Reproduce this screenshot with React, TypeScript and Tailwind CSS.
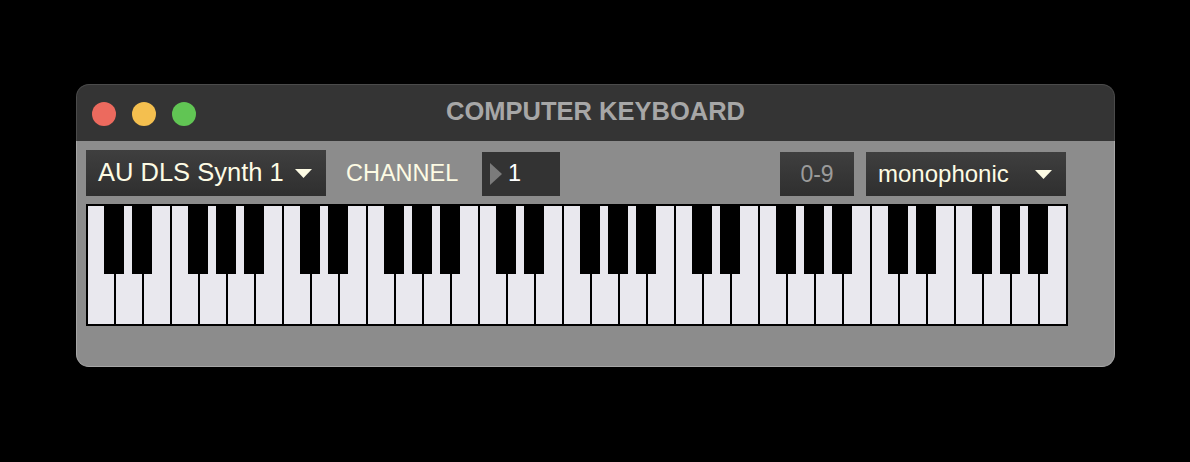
import React from "react";

const CREAM = "text-[#fdfbe4]";
const BLACK_AFTER = [0, 1, 3, 4, 5];

const WHITE_KEYS = Array.from({ length: 35 }, (_, i) => i);
const BLACK_KEYS = WHITE_KEYS.filter((i) => i < 34 && BLACK_AFTER.includes(i % 7));

function Caret() {
  return (
    <svg width="17" height="9" viewBox="0 0 17 9" className="shrink-0">
      <polygon points="0,0 17,0 8.5,9" fill="#fdfbe4" />
    </svg>
  );
}

function Keyboard() {
  return (
    <div className="relative flex gap-[2px] bg-black p-[2px] w-[982px] h-[122px]">
      {WHITE_KEYS.map((i) => (
        <div key={i} className="w-[26px] h-full bg-[#e9e8ee]" />
      ))}
      {BLACK_KEYS.map((i) => (
        <div
          key={`b${i}`}
          className="absolute top-[2px] w-[20px] h-[68px] bg-black"
          style={{ left: 28 * (i + 1) - 10 }}
        />
      ))}
    </div>
  );
}

export default function App() {
  return (
    <div
      className="w-[1190px] h-[462px] bg-black pt-[84px] pl-[76px]"
      style={{ fontFamily: '"Liberation Sans", Arial, sans-serif' }}
    >
      <div className="w-[1039px] flex flex-col">
        {/* title bar */}
        <div className="relative h-[57px] rounded-t-[13px] border border-b-0 border-[#4b4b4b] bg-[#343434] border-b border-b-[#1d1d1d] flex items-center">
          <div className="flex gap-[16px] pl-[15px] pt-[1px]">
            <span className="w-[24px] h-[24px] rounded-full bg-[#ec6a5e]" />
            <span className="w-[24px] h-[24px] rounded-full bg-[#f4bf4f]" />
            <span className="w-[24px] h-[24px] rounded-full bg-[#61c554]" />
          </div>
          <div className="absolute inset-0 flex items-center justify-center pb-[3px]">
            <span className="text-[25.5px] font-bold text-[#a7a7a7]">COMPUTER KEYBOARD</span>
          </div>
        </div>

        {/* body */}
        <div className="h-[226px] rounded-b-[13px] border border-t-0 border-[#a6a6a6] bg-[#8c8c8c] pl-[9px] pt-[9px]">
          <div className="flex items-end h-[46px]">
            <div className={`w-[240px] h-[46px] flex items-center justify-between pl-[12px] pr-[14px] bg-linear-to-b from-[#3f3f3f] to-[#2f2f2f] ${CREAM}`}>
              <span className="text-[25.5px] leading-none">AU DLS Synth 1</span>
              <Caret />
            </div>
            <div className={`h-[44px] flex items-center ml-[20px] w-[136px] text-[23.5px] ${CREAM}`}>CHANNEL</div>
            <div className="w-[78px] h-[44px] bg-[#333333] flex items-center pl-[8px]">
              <svg width="12" height="22" viewBox="0 0 12 22">
                <polygon points="0,0 12,11 0,22" fill="#7b7b7b" />
              </svg>
              <span className="ml-[6px] text-[23.5px] text-white leading-none">1</span>
            </div>
            <div className="w-[220px]" />
            <div className="w-[74px] h-[44px] flex items-center justify-center bg-linear-to-b from-[#3f3f3f] to-[#2f2f2f] text-[23px] text-[#9b9b9b]">
              0-9
            </div>
            <div className={`ml-[12px] w-[200px] h-[44px] flex items-center justify-between pl-[12px] pr-[14px] bg-linear-to-b from-[#3f3f3f] to-[#2f2f2f] ${CREAM}`}>
              <span className="text-[24px] leading-none">monophonic</span>
              <Caret />
            </div>
          </div>
          <div className="mt-[8px]">
            <Keyboard />
          </div>
        </div>
      </div>
    </div>
  );
}
